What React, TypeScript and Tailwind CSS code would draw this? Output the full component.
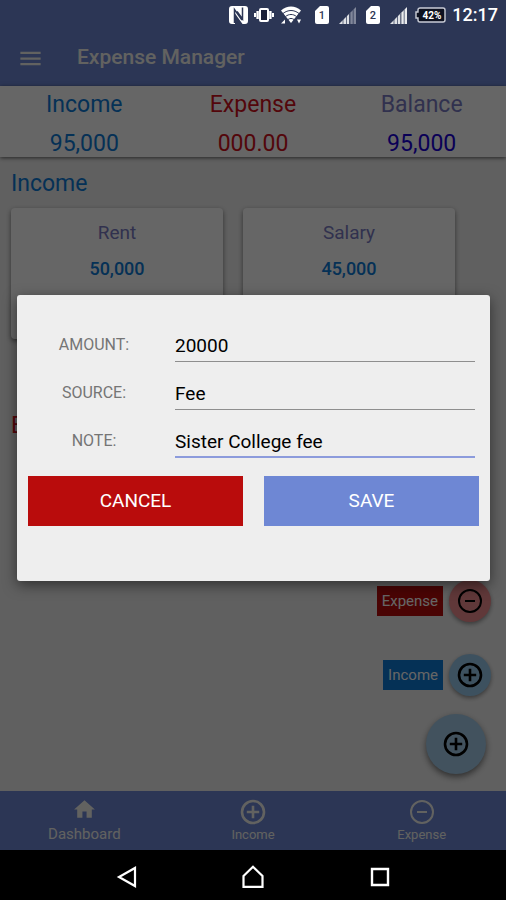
import { useState } from 'react';
import type { ReactNode } from 'react';
import { MdHome, MdMenu } from 'react-icons/md';

function PlusCircle() {
  return (
    <svg width="26" height="26" viewBox="0 0 26 26" fill="none" stroke="currentColor" strokeWidth="2.6" aria-hidden="true">
      <circle cx="13" cy="13" r="11" />
      <path d="M13 6.8v12.4M6.8 13h12.4" />
    </svg>
  );
}

function MinusCircle() {
  return (
    <svg width="26" height="26" viewBox="0 0 26 26" fill="none" stroke="currentColor" strokeWidth="2" aria-hidden="true">
      <circle cx="13" cy="13" r="11" />
      <path d="M8 13h10" />
    </svg>
  );
}

function SimIcon({ slot }: { slot: string }) {
  return (
    <svg width="14" height="18" viewBox="0 0 14 18">
      <path d="M5 0h7a2 2 0 0 1 2 2v14a2 2 0 0 1-2 2H2a2 2 0 0 1-2-2V5z" fill="#fff" />
      <text x="7" y="13" textAnchor="middle" fontSize="11" fontWeight="500" fontFamily="Roboto" fill="#2c3655">
        {slot}
      </text>
    </svg>
  );
}

function SignalIcon({ weak = false }: { weak?: boolean }) {
  return (
    <svg width="17" height="17" viewBox="0 0 17 17" fill="#fff">
      <path d="M0 17L10 7v10z" opacity="0.85" />
      <path d="M10.500 6.500L17 0v17h-6.500z" opacity={weak ? 0.4 : 0.9} />
      <path d="M4 12v5M7.500 9v8M11 6v11M14.200 2.500V17" stroke="#2c3655" strokeWidth="0.700" />
    </svg>
  );
}

function StatusBar() {
  return (
    <div className="flex h-[30px] items-center justify-end bg-[#2c3655] pr-2 text-white">
      <svg width="19" height="18" viewBox="0 0 19 18" className="mr-1.5">
        <path d="M3 0h13a3 3 0 0 1 3 3v12a3 3 0 0 1-3 3h-2.500L6 7.500V18H3a3 3 0 0 1-3-3V3a3 3 0 0 1 3-3z" fill="#fff" />
        <path d="M5.500 17V3.500L13 14M13.500 1.500v11.500L8 5.500" fill="none" stroke="#2c3655" strokeWidth="1.500" />
      </svg>
      <svg width="20" height="16" viewBox="0 0 20 16" className="mr-[7px]" fill="none" stroke="#fff">
        <rect x="6" y="2" width="8" height="12" rx="1" strokeWidth="2" fill="#1a2038" />
        <path d="M3.600 4v8M16.400 4v8" strokeWidth="2.400" />
        <path d="M1 6v4M19 6v4" strokeWidth="2" />
      </svg>
      <svg width="20" height="18" viewBox="0 0 20 18" className="mr-3.5">
        <path d="M0 4.500C6-.8 14-.8 20 4.500L10 17z" fill="#fff" />
        <path d="M2 7.500c5-4 11-4 16 0M4.500 10.500c3.500-2.700 7.500-2.700 11 0M7 13.500c2-1.400 4-1.400 6 0" fill="none" stroke="#2c3655" strokeWidth="1" />
        <path d="M0 17.500l4-4v4zM16 13.500h4l-2 4z" fill="#fff" />
      </svg>
      <div className="mr-2 flex items-center gap-2.5">
        <SimIcon slot="1" />
        <SignalIcon weak />
        <SimIcon slot="2" />
        <SignalIcon />
      </div>
      <svg width="31" height="16" viewBox="0 0 31 16" className="mr-1.5">
        <path d="M5 1h23a2 2 0 0 1 2 2v10a2 2 0 0 1-2 2H5a2 2 0 0 1-2-2v-2H1V5h2V3a2 2 0 0 1 2-2z" fill="#0d1120" stroke="#c9ccd6" strokeWidth="1.400" />
        <text x="17" y="12" textAnchor="middle" fontSize="10" fontWeight="700" fontFamily="Roboto" fill="#fff">
          42%
        </text>
      </svg>
      <time className="text-lg font-medium">12:17</time>
    </div>
  );
}

function SummaryItem({ label, value, labelColor, valueColor }: {
  label: string;
  value: string;
  labelColor: string;
  valueColor: string;
}) {
  return (
    <div className="pt-px text-center text-[23px]">
      <div className={`leading-9 ${labelColor}`}>{label}</div>
      <div className={`mt-2 leading-[26px] ${valueColor}`}>{value}</div>
    </div>
  );
}

function SourceCard({ name, amount }: { name: string; amount: string }) {
  return (
    <div className="h-[131px] w-[212px] shrink-0 rounded-sm bg-white pt-[7px] text-center text-[19px] leading-9 shadow-[0_2px_5px_rgba(0,0,0,0.5)]">
      <div className="text-[#7a7cc4]">{name}</div>
      <div className="text-lg leading-9 font-medium text-[#0d7ad6]">{amount}</div>
    </div>
  );
}

function SpeedDialRow({ label, labelBg, fabBg, children }: {
  label: string;
  labelBg: string;
  fabBg: string;
  children: ReactNode;
}) {
  return (
    <div className="flex items-center gap-1.5">
      <span className={`flex h-[30px] items-center px-[5px] text-[15px] text-white ${labelBg}`}>{label}</span>
      <button
        aria-label={`Add ${label.toLowerCase()}`}
        className={`flex size-[42px] items-center justify-center rounded-full text-black shadow-[0_2px_4px_rgba(0,0,0,0.4)] ${fabBg}`}
      >
        {children}
      </button>
    </div>
  );
}

function Field({ id, label, value, active = false, onChange }: {
  id: string;
  label: string;
  value: string;
  active?: boolean;
  onChange: (value: string) => void;
}) {
  return (
    <div className="flex h-12 items-end pr-1">
      <label htmlFor={id} className="w-[132px] text-center text-base leading-[34px] text-[#757575]">
        {label}
      </label>
      <input
        id={id}
        value={value}
        onChange={(e) => onChange(e.target.value)}
        className={`ml-[15px] h-8 min-w-0 flex-1 bg-transparent text-[19px] text-black outline-none ${
          active ? 'border-b-2 border-[#8c9bdc]' : 'border-b border-[#8e8e8e]'
        }`}
      />
    </div>
  );
}

function IncomeDialog() {
  const [amount, setAmount] = useState('20000');
  const [source, setSource] = useState('Fee');
  const [note, setNote] = useState('Sister College fee');

  return (
    <form
      role="dialog"
      aria-label="Add income"
      onSubmit={(e) => e.preventDefault()}
      className="w-full rounded-[3px] bg-[#eeeeee] px-[11px] pt-[19px] pb-[55px] shadow-[0_4px_14px_rgba(0,0,0,0.5)]"
    >
      <Field id="amount" label="AMOUNT:" value={amount} onChange={setAmount} />
      <Field id="source" label="SOURCE:" value={source} onChange={setSource} />
      <Field id="note" label="NOTE:" value={note} onChange={setNote} active />
      <div className="mt-[18px] grid grid-cols-2 gap-[21px] text-[19px] text-white">
        <button type="button" className="h-[50px] bg-[#b90c0c]">CANCEL</button>
        <button type="submit" className="h-[50px] bg-[#6e87d4]">SAVE</button>
      </div>
    </form>
  );
}

export default function App() {
  return (
    <div className="flex min-h-screen flex-col bg-black font-[Roboto,sans-serif]">
      <StatusBar />

      <div className="relative flex flex-1 flex-col bg-[#f0f0f0]">
        <header className="flex h-14 items-center bg-[#6e87d4] px-[17px] text-[#f5f5f0]">
          <button aria-label="Open menu">
            <MdMenu size={27} />
          </button>
          <h1 className="ml-[33px] text-[21px] font-medium">Expense Manager</h1>
        </header>

        <section className="grid grid-cols-3 bg-white shadow-[0_1px_4px_rgba(0,0,0,0.6)]">
          <SummaryItem label="Income" value="95,000" labelColor="text-[#0d7ad6]" valueColor="text-[#0d7ad6]" />
          <SummaryItem label="Expense" value="000.00" labelColor="text-[#d0101c]" valueColor="text-[#d0101c]" />
          <SummaryItem label="Balance" value="95,000" labelColor="text-[#7a7cc4]" valueColor="text-[#1a00d8]" />
        </section>

        <main className="relative flex-1 px-[11px] pt-2">
          <h2 className="text-[23px] leading-[38px] text-[#0d7ad6]">Income</h2>
          <div className="mt-[5px] flex gap-5">
            <SourceCard name="Rent" amount="50,000" />
            <SourceCard name="Salary" amount="45,000" />
          </div>
          <h2 className="mt-[68px] text-[23px] leading-[38px] text-[#d0101c]">Expense</h2>

          <div className="absolute right-[15px] bottom-[17px] flex flex-col items-end">
            <SpeedDialRow label="Expense" labelBg="bg-[#b90c0c]" fabBg="bg-[#f08c90]">
              <MinusCircle />
            </SpeedDialRow>
            <div className="mt-8">
              <SpeedDialRow label="Income" labelBg="bg-[#0d7ad6]" fabBg="bg-[#9acbee]">
                <PlusCircle />
              </SpeedDialRow>
            </div>
            <button
              aria-label="Add entry"
              className="mt-[18px] mr-[5px] flex size-[60px] items-center justify-center rounded-full bg-[#a6cdea] text-black shadow-[0_3px_6px_rgba(0,0,0,0.5)]"
            >
              <PlusCircle />
            </button>
          </div>
        </main>

        <nav className="grid h-[59px] grid-cols-3 bg-[#6e87d4] text-[#f5f5f0]">
          <a href="#dashboard" className="flex flex-col items-center pt-1.5">
            <MdHome size={25} />
            <span className="text-[15px] leading-6">Dashboard</span>
          </a>
          <a href="#income" className="flex flex-col items-center pt-2">
            <PlusCircle />
            <span className="text-[13px] leading-5">Income</span>
          </a>
          <a href="#expense" className="flex flex-col items-center pt-2">
            <MinusCircle />
            <span className="text-[13px] leading-5">Expense</span>
          </a>
        </nav>

        <div className="absolute inset-0 flex items-center justify-center bg-black/60 pr-4 pb-1 pl-[17px]">
          <IncomeDialog />
        </div>
      </div>

      <div className="flex h-[50px] justify-center bg-black pt-1 text-white">
        <div className="grid w-3/4 grid-cols-3 place-items-center">
          <button aria-label="Back">
            <svg width="24" height="24" viewBox="0 0 24 24" fill="none" stroke="currentColor" strokeWidth="2.200">
              <path d="M20 3v18L4 12z" />
            </svg>
          </button>
          <button aria-label="Home">
            <svg width="24" height="24" viewBox="0 0 24 24" fill="none" stroke="currentColor" strokeWidth="2.200">
              <path d="M2.500 11L12 1.800 21.500 11v10.800h-19z" />
            </svg>
          </button>
          <button aria-label="Recent apps">
            <svg width="24" height="24" viewBox="0 0 24 24" fill="none" stroke="currentColor" strokeWidth="2.400">
              <path d="M4 4h16v16H4z" />
            </svg>
          </button>
        </div>
      </div>
    </div>
  );
}
